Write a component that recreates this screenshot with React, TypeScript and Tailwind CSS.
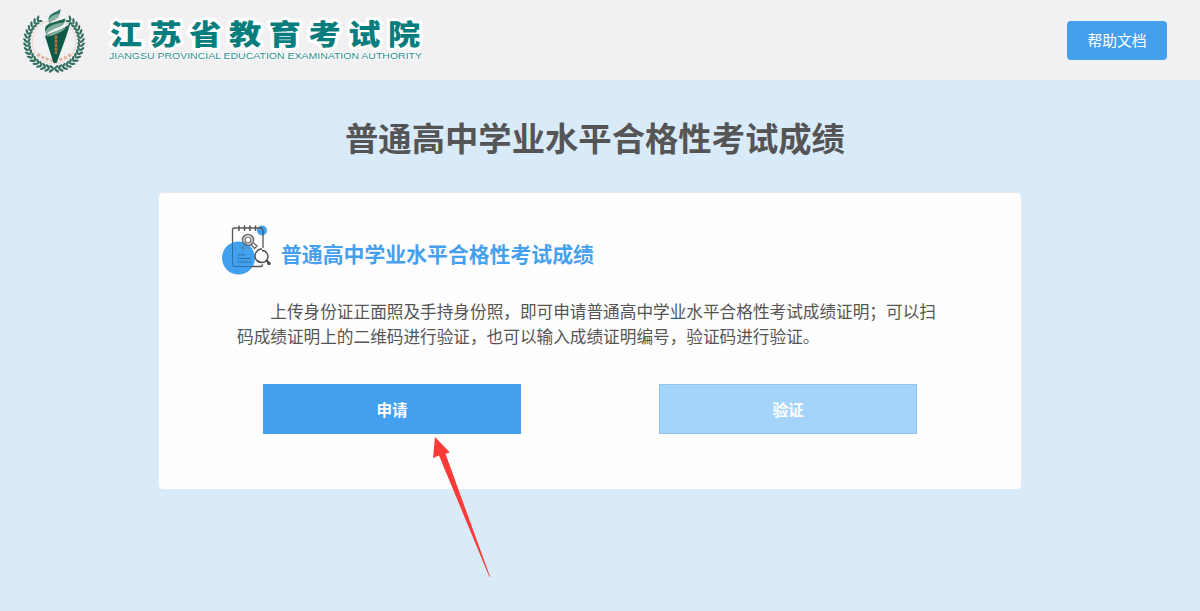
const leafAngles = Array.from({ length: 17 }, (_, i) => 34 + i * 8.8)

function Emblem() {
  return (
    <svg className="h-[68px] w-[64px] shrink-0" viewBox="0 0 64 68" fill="none">
      {/* Laurel wreath, mirrored left and right */}
      {[1, -1].map((side) => (
        <g key={side} transform={`translate(32 36) scale(${side} 1)`} fill="#34705f">
          {leafAngles.map((angle) => (
            <g key={angle} transform={`rotate(${angle})`}>
              <ellipse cx="0" cy="-28.7" rx="3" ry="1.2" transform="rotate(42 0 -28.7)" />
              <ellipse cx="0" cy="-25.2" rx="2.8" ry="1.2" transform="rotate(-32 0 -25.2)" />
            </g>
          ))}
        </g>
      ))}
      <circle cx="32" cy="36" r="21.8" stroke="#f0d0c4" strokeWidth="0.9" />
      <path d="M15.5 48Q32 60.5 49.5 48" stroke="#e3b09a" strokeWidth="3" strokeDasharray="3 1.7" />
      {/* Torch */}
      <path d="M26.5 14C26.5 7.5 33 7 38.5 3.2L37 10.5C34.5 14 29.5 14 26.8 19Z" fill="#8ab5a4" />
      <path d="M26.5 14C26.5 7.5 33 7 38.5 3.2L37.8 7.6C34 7.6 29 9.8 26.5 14Z" fill="#28705f" />
      <path d="M23.2 25C22 16.5 32 17 43.5 12.5L41.5 18.5C36 23 28 22.5 24 29.5Z" fill="#7fad9b" />
      <path d="M23.2 25C22 16.5 32 17 43.5 12.5L42.2 16.5C35 17.3 28 18.5 23.2 25Z" fill="#1c6554" />
      <path d="M23 30C30 25.5 41 25 48.5 16.8L44 31L34.6 57H31.5L23 30Z" fill="#0d5947" />
      <path d="M23.2 30.5Q37 30 48 18.5L45.5 21.5Q35 24 23.2 30.5Z" fill="#82ae9b" />
      <path d="M34 29.5V48" stroke="#b0713e" strokeWidth="2.6" strokeDasharray="3.2 0.8" />
    </svg>
  )
}

function Wordmark() {
  return (
    <svg className="h-[62px] w-[330px] shrink-0" viewBox="0 0 330 62">
      <text
        x="0"
        y="0"
        transform="translate(9.8 36) scale(1.13 1)"
        fill="#087d7d"
        stroke="#fff"
        strokeWidth="6"
        strokeLinejoin="round"
        paintOrder="stroke"
        className="font-['Noto_Sans_CJK_SC',sans-serif] text-[28.5px] font-black tracking-[6.7px]"
      >
        江苏省教育考试院
      </text>
      <text
        x="9"
        y="50"
        textLength="313"
        lengthAdjust="spacingAndGlyphs"
        fill="#278d8e"
        stroke="#fff"
        strokeWidth="1.5"
        paintOrder="stroke"
        className="font-['Liberation_Sans',sans-serif] text-[9.6px]"
      >
        JIANGSU PROVINCIAL EDUCATION EXAMINATION AUTHORITY
      </text>
    </svg>
  )
}

function ReportIcon() {
  return (
    <svg className="h-[52px] w-[52px] shrink-0" viewBox="0 0 52 52" fill="none">
      <circle cx="16.5" cy="35" r="16.5" fill="#42a0f0" />
      <circle cx="40" cy="7.5" r="5" fill="#42a0f0" />
      {/* Notebook outline */}
      <path d="M10.5 19V7Q10.5 5 12.5 5H38.5Q41 5 41 9V25M29 43.5H39.5L41 41.5" stroke="#555" strokeWidth="1.3" />
      <path d="M10.5 19V41Q10.5 43.5 13 43.5H30" stroke="#33709f" strokeWidth="1" />
      <path d="M17 2.5V8M22.5 2.5V8M28 2.5V8M33.5 2.5V8" stroke="#555" strokeWidth="1.5" />
      <path d="M15.5 32H23M15.5 35.5H29M15.5 39H29" stroke="#33709f" strokeWidth="1" />
      {/* Magnifiers */}
      <circle cx="26" cy="17" r="5.5" stroke="#666" strokeWidth="1.5" />
      <circle cx="26" cy="17" r="3" stroke="#666" strokeWidth="1.2" />
      <path d="M29.5 22L32.5 25.5L35 23L31.5 20M20 24L22 26" stroke="#666" strokeWidth="1.3" />
      <circle cx="40" cy="33" r="7.2" fill="#fff" />
      <path d="M40 26A7 7 0 0 0 34 36.5L37 39.5M40 27.5A6 6 0 1 1 35.5 37.5" stroke="#444" strokeWidth="1.3" />
      <path d="M44 37L47 40" stroke="#444" strokeWidth="2" />
      <circle cx="47" cy="40.5" r="1.7" fill="#444" />
    </svg>
  )
}

export default function App() {
  return (
    <div className="relative flex h-[611px] w-[1200px] flex-col overflow-hidden bg-[#d9eaf8] font-['Noto_Sans_CJK_SC',sans-serif]">
      <header className="flex h-20 shrink-0 items-center justify-between bg-[#f1f1f3] pr-[33px] pl-[22px]">
        <div className="flex items-center gap-[14px]">
          <Emblem />
          <Wordmark />
        </div>
        <button className="h-[39px] w-[100px] rounded bg-[#44a0ef] pb-[2px] text-[14.8px] leading-[37px] text-white">
          帮助文档
        </button>
      </header>

      <main className="flex flex-col items-center pr-5">
        <h1 className="mt-8 ml-[10px] text-[33.33px] leading-[50px] font-bold text-[#555]">
          普通高中学业水平合格性考试成绩
        </h1>

        <section className="mt-[30px] h-[298px] w-[864px] rounded-[5px] border border-[#e3ecf4] bg-[#fefefe] pt-[30px] pl-[63px]">
          <div className="flex items-start gap-[7px]">
            <ReportIcon />
            <h2 className="mt-[14px] text-[20.87px] leading-8 font-bold text-[#46a0f0]">
              普通高中学业水平合格性考试成绩
            </h2>
          </div>

          <p className="mt-[24px] ml-[15px] w-[701px] indent-[2em] text-[16.65px] leading-[25px] text-[#555]">
            上传身份证正面照及手持身份照，即可申请普通高中学业水平合格性考试成绩证明；可以扫码成绩证明上的二维码进行验证，也可以输入成绩证明编号，验证码进行验证。
          </p>

          <div className="mt-[35px] ml-[41px] flex gap-[138px]">
            <button className="h-[50px] w-[258px] bg-[#44a0ef] pt-[2px] text-[15.6px] font-bold text-white">申请</button>
            <button className="h-[50px] w-[258px] border border-[#8fc4f3] bg-[#a4d4f9] pt-[2px] text-[15.6px] font-bold text-white">
              验证
            </button>
          </div>
        </section>
      </main>

      {/* Arrow pointing at the apply button */}
      <svg className="absolute top-[436px] left-[432px] h-[142px] w-[60px]" viewBox="0 0 60 142">
        <path d="M3 1L17.8 16.5L13.5 17.8L58 140.5L57.4 141L7 19.6L1 22Z" fill="#fc3a37" />
      </svg>
    </div>
  )
}
